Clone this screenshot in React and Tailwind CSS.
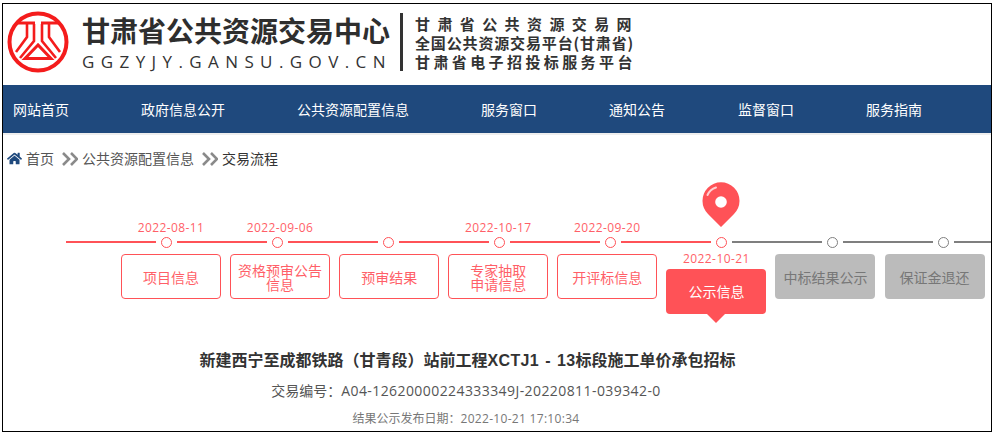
import React from 'react';
import { FaHome } from 'react-icons/fa';

const navItems = [
  { label: '网站首页', w: 'w-[128px]' },
  { label: '政府信息公开', w: 'w-[156px]' },
  { label: '公共资源配置信息', w: 'w-[184px]' },
  { label: '服务窗口', w: 'w-[128px]' },
  { label: '通知公告', w: 'w-[129px]' },
  { label: '监督窗口', w: 'w-[128px]' },
  { label: '服务指南', w: 'w-[100px]' },
];

const steps = [
  { label: '项目信息', date: '2022-08-11', state: 'done' },
  { label: '资格预审公告信息', date: '2022-09-06', state: 'done' },
  { label: '预审结果', state: 'done' },
  { label: '专家抽取\n申请信息', date: '2022-10-17', state: 'done' },
  { label: '开评标信息', date: '2022-09-20', state: 'done' },
  { label: '公示信息', date: '2022-10-21', state: 'current' },
  { label: '中标结果公示', state: 'todo' },
  { label: '保证金退还', state: 'todo' },
];

const cjk = { fontFamily: '"Noto Sans CJK SC", sans-serif' };
const latin = { fontFamily: '"Open Sans", "Noto Sans CJK SC", sans-serif' };

const Logo = () => (
  <svg width="62" height="62" viewBox="0 0 62 62" fill="none" stroke="#f41c1c" className="mb-[5px]">
    <circle cx="31" cy="31" r="28.5" strokeWidth="4" />
    <path d="M11 12 H28 M34 12 H51" strokeWidth="3" />
    <path d="M20 13 V26 L9 41 M27 13 V30 L13 47" strokeWidth="2.6" />
    <path d="M42 13 V26 L53 41 M35 13 V30 L49 47" strokeWidth="2.6" />
    <path d="M31 34 L18 47.5 H44 Z" strokeWidth="3" />
  </svg>
);

const Pin = () => (
  <svg width="38" height="46" viewBox="0 0 38 46">
    <path d="M19 46 L6 33 A18.5 18.5 0 1 1 32 33 Z" fill="#ff5257" />
    <circle cx="19" cy="21" r="5.8" fill="#fff" />
    <path d="M5.5 14 A14 14 0 0 1 14 6.5" stroke="#ffd0d2" strokeWidth="2" fill="none" strokeLinecap="round" />
  </svg>
);

const Dot = ({ state }) => {
  const left = state === 'todo' ? 'bg-[#7f7f7f]' : 'bg-[#ff5257]';
  const right = state === 'done' ? 'bg-[#ff5257]' : 'bg-[#7f7f7f]';
  const ring = state === 'todo' ? 'border-[#7f7f7f]' : 'border-[#ff5257]';

  return (
    <div className="w-[111px] shrink-0 flex items-center">
      <div className={`flex-1 h-[2px] ${left}`} />
      <div className={`w-[11px] h-[11px] mx-[5px] rounded-full border bg-white ${ring}`} />
      <div className={`flex-1 h-[2px] ${right}`} />
    </div>
  );
};

const StepDate = ({ date }) => (
  <div className="text-center text-[12px] leading-[16px] tracking-[0.4px] text-[#ff5f68] whitespace-nowrap" style={latin}>
    {date}
  </div>
);

const StepBox = ({ step }) => {
  if (step.state === 'current') {
    return (
      <div className="w-[100px] shrink-0 -mt-[3px] flex flex-col items-center">
        <StepDate date={step.date} />
        <div className="mt-[2px] w-full h-[45px] rounded-[4px] bg-[#ff5257] text-white text-[14px] flex items-center justify-center">
          {step.label}
        </div>
        <div className="w-0 h-0 border-x-[9px] border-x-transparent border-t-[9px] border-t-[#ff5257]" />
      </div>
    );
  }
  const tone = step.state === 'todo' ? 'bg-[#bbbbbb] text-[#777777]' : 'border border-[#ff5257] text-[#ff5f68]';
  return (
    <div className={`w-[100px] shrink-0 h-[45px] rounded-[4px] flex items-center justify-center text-center text-[14px] leading-[14px] whitespace-pre-line px-[6px] ${tone}`}>
      {step.label}
    </div>
  );
};

const Crumbs = () => (
  <svg width="16" height="14" viewBox="0 0 16 14" fill="none" stroke="#8a8a8a" strokeWidth="2.6">
    <path d="M1 1 L7 7 L1 13 M9 1 L15 7 L9 13" />
  </svg>
);

export default function App() {
  return (
    <div className="w-[992px] h-[433px] overflow-hidden bg-white" style={cjk}>
      <div className="mt-[3px] ml-[2px] w-[990px] h-[429px] border border-black overflow-hidden">
        <header className="h-[81px] flex items-center pl-[4px]">
          <Logo />
          <div className="ml-[13px] w-[316px] mb-[3px]">
            <div className="text-[28px] leading-[32px] font-bold text-[#2e2e2e] whitespace-nowrap">甘肃省公共资源交易中心</div>
            <div className="text-[17px] leading-[20px] mt-[6px] font-medium tracking-[6.4px] text-[#333333] whitespace-nowrap" style={latin}>GGZYJY.GANSU.GOV.CN</div>
          </div>
          <div className="ml-[2px] w-[3px] h-[58px] mb-[5px] bg-[#333333]" />
          <div className="ml-[12px] mb-[5px] text-[15px] leading-[19px] font-bold text-[#333333] whitespace-nowrap">
            <div className="tracking-[7.4px]">甘肃省公共资源交易网</div>
            <div className="tracking-[0.85px]">全国公共资源交易平台(甘肃省)</div>
            <div className="tracking-[3.4px]">甘肃省电子招投标服务平台</div>
          </div>
        </header>

        <nav className="h-[48px] bg-[#1f497d] flex items-center text-white text-[14px] pl-[10px]">
          {navItems.map((item) => (
            <span key={item.label} className={`${item.w} shrink-0`}>{item.label}</span>
          ))}
        </nav>
        <div className="h-[2px] bg-[#eeeeee]" />

        <div className="flex items-center h-[47px] pl-[4px] text-[14px] text-[#555555]">
          <FaHome className="w-[15px] h-[15px] text-[#1f497d]" />
          <span className="ml-[4px]">首页</span>
          <span className="ml-[8px]"><Crumbs /></span>
          <span className="ml-[4px]">公共资源配置信息</span>
          <span className="ml-[8px]"><Crumbs /></span>
          <span className="ml-[4px] text-[#333333]">交易流程</span>
        </div>

        <div className="relative mt-[38px] w-[1100px]">
          <div className="absolute -top-[39px] left-[699px]"><Pin /></div>

          <div className="flex gap-[9.08px] pl-[118px] h-[16px]">
            {steps.map((step) => (
              <div key={step.label} className="w-[100px] shrink-0">
                {step.date && step.state !== 'current' && <StepDate date={step.date} />}
              </div>
            ))}
          </div>

          <div className="flex items-center h-[12px] pl-[63px]">
            <div className="w-[45px] h-[2px] shrink-0 bg-[#ff5257]" />
            {steps.map((step) => (
              <Dot key={step.label} state={step.state} />
            ))}
          </div>

          <div className="flex items-start gap-[9.08px] pl-[118px] mt-[6px]">
            {steps.map((step) => (
              <StepBox key={step.label} step={step} />
            ))}
          </div>
        </div>

        <div className="mt-[26px] w-[929px] text-center text-[16px] leading-[22px] font-bold text-[#333333] whitespace-nowrap" style={latin}>
          新建西宁至成都铁路（甘青段）站前工程<span className="font-['Liberation_Sans'] tracking-[0.3px] [word-spacing:1.5px]">XCTJ1 - 13</span>标段施工单价承包招标
        </div>
        <div className="mt-[9px] w-[926px] text-center text-[14px] leading-[20px] text-[#555555]" style={latin}>
          交易编号：<span className="tracking-[0.42px]">A04-12620000224333349J-20220811-039342-0</span>
        </div>
        <div className="mt-[10px] w-[926px] text-center text-[12px] leading-[16px] text-[#777777]" style={latin}>
          结果公示发布日期：<span className="tracking-[0.3px]">2022-10-21 17:10:34</span>
        </div>
      </div>
    </div>
  );
}
